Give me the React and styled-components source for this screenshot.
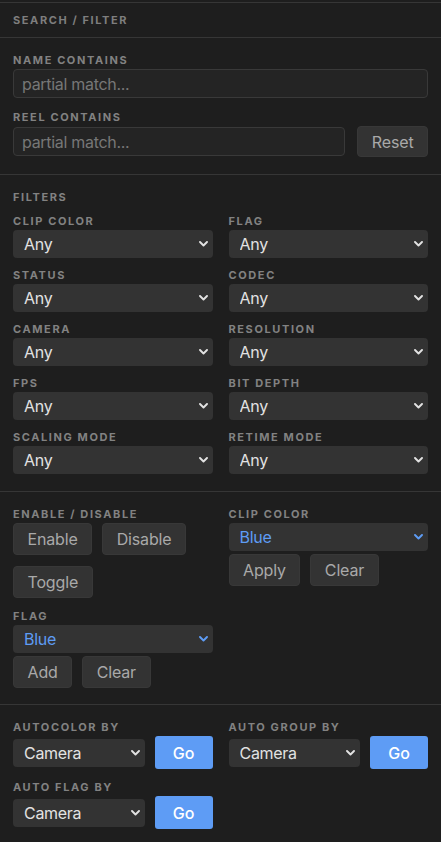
import React from "react";
import styled, { createGlobalStyle } from "styled-components";

const GlobalStyle = createGlobalStyle`
  * { box-sizing: border-box; }
  html, body { margin: 0; padding: 0; background: #1e1e1e; }
  body { font-family: Inter, "Noto Sans", sans-serif; -webkit-font-smoothing: antialiased; }
`;

const Panel = styled.div`
  padding-top: 2px;
  background: #1e1e1e;
  min-height: 842px;
`;

const PanelInner = styled.div`
  border-top: 1px solid #363636;
`;

const Header = styled.div`
  padding: 10px 13px;
  border-bottom: 1px solid #363636;
`;

const Caption = styled.div`
  font-size: 11px;
  line-height: 14px;
  font-weight: 700;
  letter-spacing: 1.6px;
  text-transform: uppercase;
  color: ${(p) => p.$color || "#828282"};
  margin-bottom: ${(p) => p.$mb ?? 2}px;
  white-space: nowrap;
`;

const Section = styled.div`
  padding: 15px 13px ${(p) => p.$pb ?? 17}px;
  border-bottom: ${(p) => (p.$last ? "none" : "1px solid #363636")};
`;

const Field = styled.div`
  display: flex;
  flex-direction: column;
  margin-top: ${(p) => p.$mt || 0}px;
`;

const TextInput = styled.input`
  width: 100%;
  height: 29px;
  background: #242424;
  border: 1px solid #393939;
  border-radius: 4px;
  padding: 0 8px;
  font-family: inherit;
  font-size: 16px;
  letter-spacing: -0.3px;
  color: #ddd;
  outline: none;
  &::placeholder { color: #777; }
`;

const InlineRow = styled.div`
  display: flex;
  align-items: center;
  gap: ${(p) => p.$gap ?? 10}px;
  margin-top: ${(p) => p.$mt || 0}px;
`;

const Button = styled.button`
  flex: 0 0 auto;
  height: ${(p) => p.$h ?? 32}px;
  padding: 0 13.5px;
  background: #333;
  border: 1px solid #383838;
  border-radius: 4px;
  color: #a9a9a9;
  font-family: inherit;
  font-size: 16px;
  letter-spacing: -0.15px;
  cursor: pointer;
`;

const GoButton = styled.button`
  flex: 0 0 58px;
  height: 33px;
  background: #5e9cf5;
  border: none;
  border-radius: 3px;
  color: #fff;
  font-family: inherit;
  font-size: 16px;
  font-weight: 500;
  cursor: pointer;
`;

const SelectWrap = styled.div`
  position: relative;
  flex: 1 1 auto;
  min-width: 0;
  color: ${(p) => p.$color || "#e2e2e2"};
`;

const SelectEl = styled.select`
  appearance: none;
  -webkit-appearance: none;
  width: 100%;
  height: 28px;
  background: #333;
  border: none;
  border-radius: 4px;
  padding: 0 24px 0 11px;
  color: inherit;
  font-family: inherit;
  font-size: 16px;
  letter-spacing: -0.3px;
  outline: none;
`;

const Chevron = styled.svg`
  position: absolute;
  right: 5px;
  top: 50%;
  width: 9px;
  height: 6px;
  margin-top: -3px;
  pointer-events: none;
`;

const Grid = styled.div`
  display: grid;
  grid-template-columns: 1fr 1fr;
  column-gap: 16px;
  row-gap: ${(p) => p.$rowGap ?? 10}px;
  margin-top: ${(p) => p.$mt || 0}px;
  align-items: start;
`;

const Column = styled.div`
  display: flex;
  flex-direction: column;
  min-width: 0;
`;

const ButtonWrap = styled.div`
  display: flex;
  flex-wrap: wrap;
  gap: 11px 10px;
`;

const Select = ({ value, color }) => (
  <SelectWrap $color={color}>
    <SelectEl defaultValue={value}>
      <option>{value}</option>
    </SelectEl>
    <Chevron viewBox="0 0 9 6" fill="none">
      <path d="M1 1l3.5 3.5L8 1" stroke="currentColor" strokeWidth="1.9" strokeLinecap="round" strokeLinejoin="round" />
    </Chevron>
  </SelectWrap>
);

const SelectField = ({ label }) => (
  <Field>
    <Caption>{label}</Caption>
    <Select value="Any" />
  </Field>
);

const GoField = ({ label }) => (
  <Field>
    <Caption>{label}</Caption>
    <InlineRow $gap={10}>
      <Select value="Camera" />
      <GoButton>Go</GoButton>
    </InlineRow>
  </Field>
);

const filters = [
  "Clip Color", "Flag",
  "Status", "Codec",
  "Camera", "Resolution",
  "FPS", "Bit Depth",
  "Scaling Mode", "Retime Mode",
];

export default function App() {
  return (
    <>
      <GlobalStyle />
      <Panel>
        <PanelInner>
          <Header>
            <Caption $mb={0} $color="#7e7e7e">Search / Filter</Caption>
          </Header>

          <Section>
            <Field>
              <Caption>Name contains</Caption>
              <TextInput placeholder="partial match..." />
            </Field>
            <Field $mt={12}>
              <Caption>Reel contains</Caption>
              <InlineRow $gap={12}>
                <TextInput placeholder="partial match..." />
                <Button $h={31}>Reset</Button>
              </InlineRow>
            </Field>
          </Section>

          <Section>
            <Caption $mb={0}>Filters</Caption>
            <Grid $mt={10}>
              {filters.map((f) => (
                <SelectField key={f} label={f} />
              ))}
            </Grid>
          </Section>

          <Section $pb={16}>
            <Grid>
              <Column>
                <Field>
                  <Caption>Enable / Disable</Caption>
                  <ButtonWrap>
                    <Button>Enable</Button>
                    <Button>Disable</Button>
                    <Button>Toggle</Button>
                  </ButtonWrap>
                </Field>
                <Field $mt={11}>
                  <Caption>Flag</Caption>
                  <Select value="Blue" color="#5e9cf5" />
                  <InlineRow $mt={3}>
                    <Button>Add</Button>
                    <Button>Clear</Button>
                  </InlineRow>
                </Field>
              </Column>
              <Column>
                <Field>
                  <Caption>Clip Color</Caption>
                  <Select value="Blue" color="#5e9cf5" />
                  <InlineRow $mt={3}>
                    <Button>Apply</Button>
                    <Button>Clear</Button>
                  </InlineRow>
                </Field>
              </Column>
            </Grid>
          </Section>

          <Section $last>
            <Grid $rowGap={11}>
              <GoField label="Autocolor by" />
              <GoField label="Auto group by" />
              <GoField label="Auto flag by" />
            </Grid>
          </Section>
        </PanelInner>
      </Panel>
    </>
  );
}
